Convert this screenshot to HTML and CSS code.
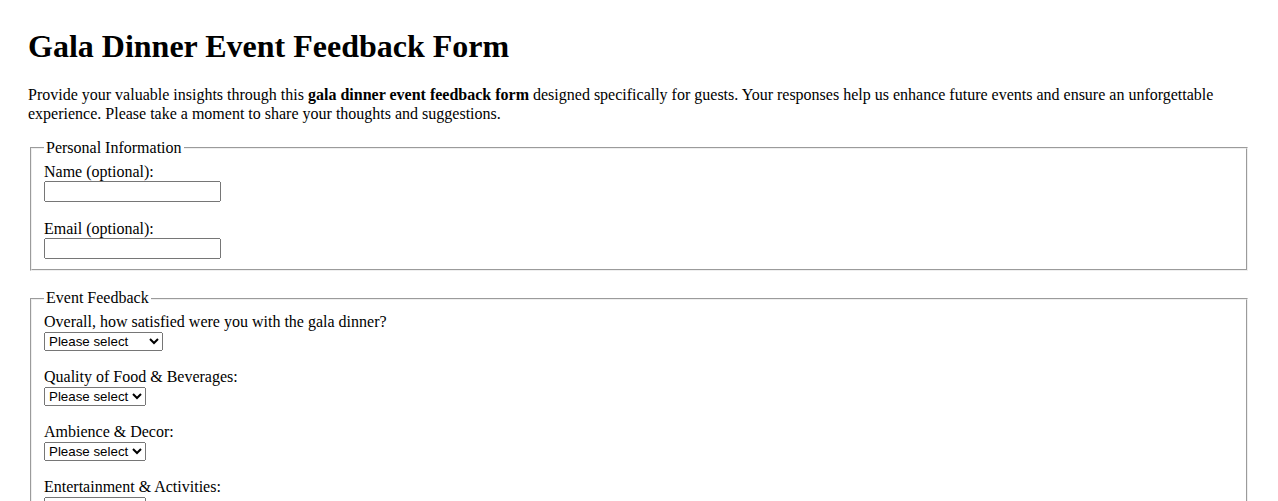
FILE: index.html
```html
<!DOCTYPE html>
<html lang="en">
<head>
    <meta charset="UTF-8">
    <meta name="viewport" content="width=device-width, initial-scale=1.0">
    <title>Gala Dinner Event Feedback Form</title>
    <link rel="stylesheet" href="styles.css">
</head>
<body>
    <h1>Gala Dinner Event Feedback Form</h1>
    <p>Provide your valuable insights through this <strong>gala dinner event feedback form</strong> designed specifically for guests. Your responses help us enhance future events and ensure an unforgettable experience. Please take a moment to share your thoughts and suggestions.</p>

    <form>
        <fieldset>
            <legend>Personal Information</legend>
            <div class="field">
                <label for="name">Name (optional):</label>
                <input type="text" id="name" name="name">
            </div>
            <div class="field">
                <label for="email">Email (optional):</label>
                <input type="email" id="email" name="email">
            </div>
        </fieldset>

        <fieldset>
            <legend>Event Feedback</legend>
            <div class="field">
                <label for="overall">Overall, how satisfied were you with the gala dinner?</label>
                <select id="overall" name="overall">
                    <option value="">Please select</option>
                    <option>Very Satisfied</option>
                    <option>Satisfied</option>
                    <option>Neutral</option>
                    <option>Unsatisfied</option>
                    <option>Very Unsatisfied</option>
                </select>
            </div>
            <div class="field">
                <label for="food">Quality of Food &amp; Beverages:</label>
                <select id="food" name="food">
                    <option value="">Please select</option>
                    <option>Excellent</option>
                    <option>Good</option>
                    <option>Average</option>
                    <option>Poor</option>
                </select>
            </div>
            <div class="field">
                <label for="ambience">Ambience &amp; Decor:</label>
                <select id="ambience" name="ambience">
                    <option value="">Please select</option>
                    <option>Excellent</option>
                    <option>Good</option>
                    <option>Average</option>
                    <option>Poor</option>
                </select>
            </div>
            <div class="field">
                <label for="entertainment">Entertainment &amp; Activities:</label>
                <select id="entertainment" name="entertainment">
                    <option value="">Please select</option>
                    <option>Excellent</option>
                    <option>Good</option>
                    <option>Average</option>
                    <option>Poor</option>
                </select>
            </div>
            <div class="field">
                <label for="service">Service &amp; Staff:</label>
                <select id="service" name="service">
                    <option value="">Please select</option>
                    <option>Excellent</option>
                    <option>Good</option>
                    <option>Average</option>
                    <option>Poor</option>
                </select>
            </div>
        </fieldset>
    </form>
</body>
</html>
```

FILE: styles.css
```css
body {
    font-family: "Liberation Serif", "Times New Roman", serif;
    font-size: 16px;
    line-height: 1.15;
    margin: 28px;
    color: #000;
    background: #fff;
}
h1 {
    font-size: 32px;
    margin: 0 0 0.67em;
}
p {
    margin: 0 0 1em;
}
fieldset {
    margin: 0 2px 18px;
}
.field {
    margin-bottom: 17.6px;
}
.field:last-child {
    margin-bottom: 0;
}
label {
    display: block;
}
input,
select {
    display: block;
    font: 13.333px "Liberation Sans", Arial, sans-serif;
}
input {
    box-sizing: border-box;
    width: 177px;
    height: 21px;
}
select {
    box-sizing: border-box;
    height: 19px;
}
```
